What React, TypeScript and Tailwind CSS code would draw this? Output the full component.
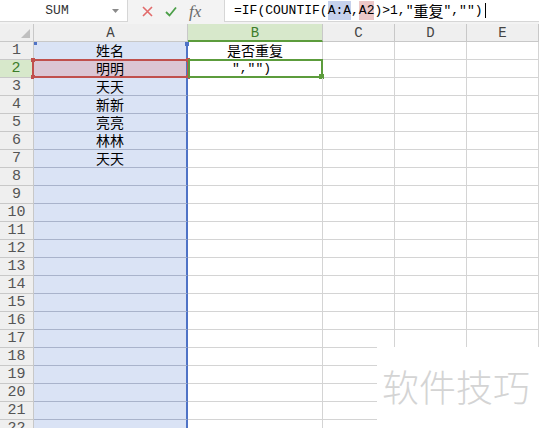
import React from "react";

const names: Record<number, string> = {
  1: "姓名",
  2: "明明",
  3: "天天",
  4: "新新",
  5: "亮亮",
  6: "林林",
  7: "天天",
};

const rows = Array.from({ length: 22 }, (_, i) => i + 1);

const mono = "font-['Liberation_Mono','Noto_Sans_CJK_SC',monospace]";

const Corner = ({ className }: { className: string }) => (
  <div className={`absolute size-[4px] bg-[#c0504d] ${className}`} />
);

const App = () => {
  return (
    <div className="relative w-[539px] h-[428px] overflow-hidden bg-white font-['Noto_Sans_CJK_SC',sans-serif] text-black">
      {/* FORMULA BAR */}
      <div className="flex h-[24px] bg-[#f3f3f3] pb-[2px]">
        <div className="flex w-[128px] items-center border-r border-b border-[#d6d6d6] bg-white">
          <span className={`flex-1 pl-[2px] text-center text-[13px] text-[#333] ${mono}`}>SUM</span>
          <svg width="7" height="4" viewBox="0 0 7 4" className="mr-[8px]">
            <path d="M0 0h7L3.5 4z" fill="#8a8a8a" />
          </svg>
        </div>
        <div className="flex w-[96px] items-center gap-[12px] pl-[14px]">
          <svg width="11" height="11" viewBox="0 0 11 11">
            <path d="M1 1l9 9M10 1l-9 9" stroke="#e26a6a" strokeWidth="1.6" />
          </svg>
          <svg width="12" height="11" viewBox="0 0 12 11">
            <path d="M1 6l3.5 3.5L11 1.5" stroke="#4c9f48" strokeWidth="1.8" fill="none" />
          </svg>
          <span className="font-['Liberation_Serif',serif] text-[17px] italic leading-none text-[#6a6a6a]">fx</span>
        </div>
        <div className={`flex flex-1 items-center border-l border-b border-[#d6d6d6] bg-white pl-[9px] text-[13px] ${mono}`}>
          <span>=IF(COUNTIF(</span>
          <span className="bg-[#c6d1ec]">A:A</span>
          <span>,</span>
          <span className="bg-[#ecc8c8]">A2</span>
          <span>)&gt;1,"</span>
          <span className="font-['Noto_Sans_CJK_SC',sans-serif] text-[15px] leading-none">重复</span>
          <span>","")</span>
          <span className="ml-[2px] h-[15px] w-px bg-black" />
        </div>
      </div>

      {/* SHEET */}
      <div className="grid grid-cols-[34px_154px_135px_72px_72px_72px] auto-rows-[18px] text-[15px] leading-[18px]">
        {/* header row */}
        <div className="relative border-r border-b border-[#c8c8c8] bg-[#efefef]">
          <svg width="9" height="9" viewBox="0 0 9 9" className="absolute right-[3px] bottom-[3px]">
            <path d="M9 0v9H0z" fill="#bfbfbf" />
          </svg>
        </div>
        <div className={`relative border-r border-b border-[#c8c8c8] bg-[#efefef] text-center text-[14px] text-[#444] ${mono}`}>
          A
        </div>
        <div className={`border-r border-b-2 border-r-[#c8c8c8] border-b-[#5c9c3c] bg-[#d7e8cb] text-center text-[14px] text-[#3c7c2a] ${mono}`}>
          B
        </div>
        {["C", "D", "E"].map((c) => (
          <div key={c} className={`border-r border-b border-[#c8c8c8] bg-[#efefef] text-center text-[14px] text-[#444] ${mono}`}>
            {c}
          </div>
        ))}

        {rows.map((r) => {
          const sel = r === 2;
          return (
            <React.Fragment key={r}>
              <div
                className={`border-b text-center text-[15px] ${mono} ${
                  sel
                    ? "border-r-2 border-r-[#5c9c3c] border-b-[#c8c8c8] bg-[#d7e8cb] text-[#3c7c2a]"
                    : "border-r border-[#c8c8c8] bg-[#efefef] text-[#555]"
                }`}
              >
                {r}
              </div>
              <div
                className={`relative border-b border-r-2 border-b-[#a9b3cb] border-r-[#4f73c6] text-center text-[14px] leading-[17px] ${
                  sel ? "bg-[#dbc6d4]" : "bg-[#dae3f5]"
                }`}
              >
                {names[r]}
                {r === 1 && (
                  <>
                    <div className="absolute top-0 left-0 size-[3px] bg-[#4f73c6]" />
                    <div className="absolute top-0 -right-[3px] size-[4px] bg-[#4f73c6]" />
                  </>
                )}
                {sel && (
                  <div className="absolute -top-px -left-[2px] -right-[3px] -bottom-px border-2 border-[#c0504d]">
                    <Corner className="-top-[3px] -left-[3px]" />
                    <Corner className="-top-[3px] -right-[3px]" />
                    <Corner className="-bottom-[3px] -left-[3px]" />
                    <Corner className="-bottom-[3px] -right-[3px]" />
                  </div>
                )}
              </div>
              <div className="relative border-r border-b border-[#d4d4d4] text-[14px] leading-[17px]">
                {r === 1 && <div className="text-center">是否重复</div>}
                {sel && (
                  <>
                    <div className={`pl-[44px] text-[13px] ${mono}`}>","")</div>
                    <div className="absolute -top-px left-0 -right-px -bottom-px border-2 border-[#5c9c3c]">
                      <div className="absolute -right-[3px] -bottom-[3px] size-[5px] bg-[#5c9c3c]" />
                    </div>
                  </>
                )}
              </div>
              <div className="border-r border-b border-[#d4d4d4]" />
              <div className="border-r border-b border-[#d4d4d4]" />
              <div className="border-r border-b border-[#d4d4d4]" />
            </React.Fragment>
          );
        })}
      </div>

      {/* WATERMARK */}
      <div className="absolute top-[347px] left-[377px] right-0 bottom-0 flex items-center bg-white pl-[5px] pb-[2px]">
        <span className="text-[37px] font-light leading-none text-[#d4d4d4]">软件技巧</span>
      </div>
    </div>
  );
};

export default App;
